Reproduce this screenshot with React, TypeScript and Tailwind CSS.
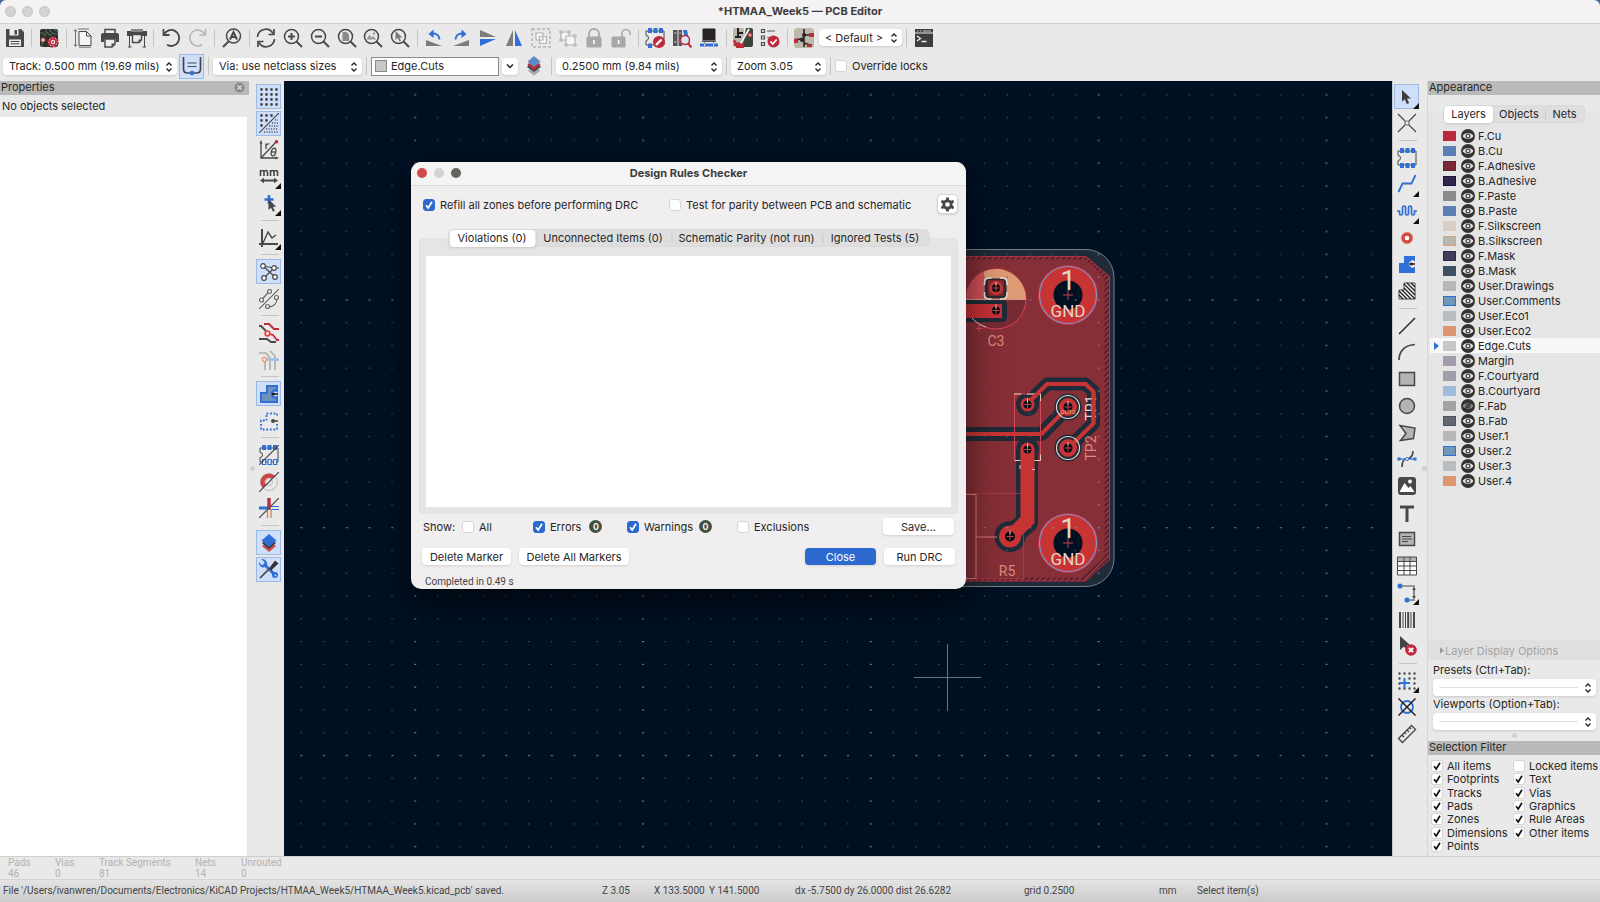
import { useState } from "react";
import type { ReactNode } from "react";
import clsx from "clsx";

const K = "#484848";
const B = "#2f6fd6";
const R = "#c0283c";
const G = "#b4b4b4";

type Tool = {
  name: string;
  icon: ReactNode;
  active?: boolean;
  more?: boolean;
};

const lens = (
  <>
    <circle cx="8.5" cy="8.5" r="7" />
    <path d="M13.5 13.5l5.5 5.5" strokeWidth="2" />
  </>
);

const footprint = (
  <path
    d="M4 3H1v4.500a2.500 2.500 0 0 1 0 5V17h18V3H4z"
    fill="none"
    stroke={K}
    strokeWidth="1"
  />
);

const topTools: (Tool | null)[] = [
  {
    name: "Save",
    icon: (
      <>
        <path d="M1 1h15l3 3v15H1z" fill={K} />
        <path d="M4.500 1h9v6.500h-9z" fill="#ececec" />
        <path d="M9.500 2h2.500v4.500H9.500z" fill={K} />
        <path d="M4 11.500h12V18H4z" fill="#ececec" />
        <path d="M5.500 13.500h9M5.500 15.800h9" stroke={K} strokeWidth="1" />
      </>
    ),
  },
  null,
  {
    name: "Board setup",
    icon: (
      <>
        <rect x="1" y="1" width="18" height="18" rx="2" fill="#2c2f2e" />
        <path
          d="M7 1v3l4 3h2M11 1v2l4 3h4M15 1l4 3M3 19v-4l3-3M1 5h3l3 3"
          fill="none"
          stroke="#55705a"
          strokeWidth="1.200"
        />
        <circle cx="4" cy="12" r="2.200" fill="#d8c8b8" stroke={R} />
        <circle
          cx="14"
          cy="14"
          r="4.600"
          fill="#e8e0e0"
          stroke={R}
          strokeWidth="2.400"
          strokeDasharray="1.900 1.710"
        />
        <circle cx="14" cy="14" r="3" fill="#e8e0e0" stroke={R} strokeWidth="1.500" />
        <circle cx="14" cy="14" r="1" fill={R} />
      </>
    ),
  },
  null,
  {
    name: "Page settings",
    icon: (
      <g fill="none" stroke="#707070" strokeWidth="1">
        <path d="M6 3.500h7.500L18 8v9.500H6z" fill="#f4f4f4" stroke={K} />
        <path d="M13.500 3.500V8H18" stroke={K} />
        <path d="M2.500 2v16M1 3.500l1.500-2 1.500 2M1 16.500l1.500 2 1.500-2M5 1h11M6 19.200h12" />
      </g>
    ),
  },
  {
    name: "Print",
    icon: (
      <>
        <path d="M5 5V1.500h10V5" fill="#ececec" stroke={K} strokeWidth="1.500" />
        <path d="M1 7a2 2 0 0 1 2-2h14a2 2 0 0 1 2 2v7h-3v-3H4v3H1z" fill={K} />
        <path d="M5 11h10v5l-3 3H5z" fill="#ececec" stroke={K} strokeWidth="1.500" />
        <path d="M15 15.500h-3.500V19z" fill={K} />
      </>
    ),
  },
  {
    name: "Plot",
    icon: (
      <>
        <path d="M0 3h20v5H0z" fill={K} />
        <path d="M4 1h12v3H4z" fill="#888" />
        <path d="M2.500 8v11M17.500 8v11M1 19h3.500M15.500 19H19" stroke={K} fill="none" />
        <path d="M5.500 6.500h9V12L12 14.500H5.500z" fill="#ececec" stroke={K} strokeWidth="1.400" />
        <path d="M14.500 11.500h-3v3z" fill={K} />
      </>
    ),
  },
  null,
  {
    name: "Undo",
    icon: (
      <g fill="none" stroke={K} strokeWidth="1.800">
        <path d="M3 6.500A8 8 0 1 1 6 16.800" />
        <path d="M2.500 1v6h6" />
      </g>
    ),
  },
  {
    name: "Redo",
    icon: (
      <g fill="none" stroke={G} strokeWidth="1.600">
        <path d="M17 6.500A8 8 0 1 0 14 16.800" />
        <path d="M17.500 1v6h-6" />
      </g>
    ),
  },
  null,
  {
    name: "Find",
    icon: (
      <>
        <g fill="none" stroke={K} strokeWidth="1.500">
          <circle cx="11.500" cy="8" r="7" />
          <path d="M6.500 13.500L1 19" strokeWidth="2" />
        </g>
        <path d="M8 11.500L11.500 4l3.500 7.500M9.500 9h4" fill="none" stroke={K} strokeWidth="2" />
      </>
    ),
  },
  null,
  {
    name: "Refresh",
    icon: (
      <g fill="none" stroke={K} strokeWidth="1.700">
        <path d="M1.500 9A8.300 8.300 0 0 1 17 5.500M18.500 11A8.300 8.300 0 0 1 3 14.500" />
        <path d="M18 1v5.500h-5.500M2 19v-5.500h5.500" />
      </g>
    ),
  },
  {
    name: "Zoom in",
    icon: (
      <g fill="none" stroke={K} strokeWidth="1.500">
        {lens}
        <path d="M8.500 5v7M5 8.500h7" strokeWidth="2" />
      </g>
    ),
  },
  {
    name: "Zoom out",
    icon: (
      <g fill="none" stroke={K} strokeWidth="1.500">
        {lens}
        <path d="M5 8.500h7" strokeWidth="2" />
      </g>
    ),
  },
  {
    name: "Zoom to page",
    icon: (
      <g fill="none" stroke={K} strokeWidth="1.500">
        {lens}
        <path d="M5.500 4h4l2.500 2.500V13H5.500z" fill="#8a8a8a" stroke="none" />
      </g>
    ),
  },
  {
    name: "Zoom to objects",
    icon: (
      <g fill="none" stroke={K} strokeWidth="1.500">
        {lens}
        <path d="M3.500 11.500l3-5 2 3 1.500-1.500 3.500 3.500z" fill="#9a9a9a" stroke="none" />
        <circle cx="11" cy="5.500" r="1.200" fill="#9a9a9a" stroke="none" />
      </g>
    ),
  },
  {
    name: "Zoom to selection",
    icon: (
      <g fill="none" stroke={K} strokeWidth="1.500">
        {lens}
        <path d="M5.500 3v9l2.200-2 1.800 3.500 1.500-.800-1.600-3.200h3z" fill="#7a7a7a" stroke="none" />
      </g>
    ),
  },
  null,
  {
    name: "Rotate counterclockwise",
    icon: (
      <>
        <path d="M2 12v6h16z" fill="#7c7c7c" />
        <path d="M6.500 6C11 4.500 15 6.500 15.500 11.500" fill="none" stroke={B} strokeWidth="1.800" />
        <path d="M9.500 1.500L4.500 6l5 4z" fill={B} />
      </>
    ),
  },
  {
    name: "Rotate clockwise",
    icon: (
      <>
        <path d="M18 12v6H2z" fill="#7c7c7c" />
        <path d="M13.500 6C9 4.500 5 6.500 4.500 11.500" fill="none" stroke={B} strokeWidth="1.800" />
        <path d="M10.500 1.500l5 4.500-5 4z" fill={B} />
      </>
    ),
  },
  {
    name: "Flip vertically",
    icon: (
      <>
        <path d="M2 2v7h16z" fill="#7c7c7c" />
        <path d="M2 18v-7h16z" fill={B} />
      </>
    ),
  },
  {
    name: "Flip horizontally",
    icon: (
      <>
        <path d="M9 2v16H2z" fill="#7c7c7c" />
        <path d="M11 2v16h7z" fill={B} />
      </>
    ),
  },
  {
    name: "Group",
    icon: (
      <g stroke={G} strokeWidth="1.200" fill="#f6f6f6">
        <path d="M1 1h18v18H1z" fill="none" strokeDasharray="3 2" strokeWidth="1.500" />
        <path d="M5 5h7v7H5zM8.500 8.500h7v7h-7z" />
      </g>
    ),
  },
  {
    name: "Ungroup",
    icon: (
      <g stroke={G} strokeWidth="1.200" fill="#f6f6f6">
        <path d="M3 4h8v8H3z" />
        <path d="M8 8h9v9H8z" />
        <path d="M2 3h2v2H2zM10 3h2v2h-2zM2 11h2v2H2zM7 16h2v2H7zM16 16h2v2h-2zM16 7h2v2h-2z" />
      </g>
    ),
  },
  {
    name: "Lock",
    icon: (
      <>
        <path d="M5 9V6a5 5 0 0 1 10 0v3" fill="none" stroke="#aaa" strokeWidth="1.800" />
        <rect x="2.500" y="8.500" width="15" height="11" rx="1.500" fill="#a8a8a8" />
        <path d="M9.200 12h1.600v4H9.200z" fill="#fff" />
      </>
    ),
  },
  {
    name: "Unlock",
    icon: (
      <>
        <path d="M11 9V5.500a4 4 0 0 1 8 0V7" fill="none" stroke="#aaa" strokeWidth="1.600" />
        <rect x="0.500" y="8.500" width="14" height="11" rx="1.500" fill="#a8a8a8" />
        <path d="M6.800 12h1.600v4H6.800z" fill="#fff" />
      </>
    ),
  },
  null,
  {
    name: "Footprint editor",
    icon: (
      <>
        {footprint}
        <path d="M3 0h4v5H3zM8.500 0h4v5h-4zM14 0h4v5h-4zM3 15.500h4V20H3z" fill={B} />
        <circle cx="14" cy="14" r="6" fill={R} />
        <path d="M11 17l5.500-5.500" stroke="#fff" strokeWidth="2.400" />
      </>
    ),
  },
  {
    name: "Footprint libraries",
    icon: (
      <>
        <path d="M1 2h4.500v16H1zM6.500 2H10v16H6.500z" fill="#555" />
        <path d="M2 5h2.500M2 14h2.500M7.500 5H9M7.500 14H9" stroke="#ccc" />
        <path d="M11 2h4l3 14h-4z" fill={B} />
        <circle cx="13" cy="12" r="4.500" fill="#dce6f2" stroke={R} strokeWidth="1.500" />
        <path d="M16 15.500l3.500 4" stroke={R} strokeWidth="2" />
      </>
    ),
  },
  {
    name: "3D viewer",
    icon: (
      <>
        <rect x="3.500" y="0.500" width="13" height="12" rx="1" fill="#282325" />
        <path d="M3 12.500h14v1.500H3z" fill="#555" />
        <path d="M5.500 14v5M14.500 14v5" stroke="#888" />
        <path d="M1 15.500h18v3H1z" fill={B} />
        <path d="M5 15.500h1v3H5zM14 15.500h1v3h-1z" fill="#dde" />
      </>
    ),
  },
  null,
  {
    name: "Update PCB from schematic",
    icon: (
      <>
        <rect x="0" y="0" width="11" height="19" rx="2" fill="#bdb8a8" />
        <path d="M13 0h5a2 2 0 0 1 2 2v15a2 2 0 0 1-2 2h-9z" fill="#3b453a" />
        <path d="M5 0v8M5 5h5M2 9h6" stroke="#222" strokeWidth="2" />
        <path d="M16 1L8 15" stroke="#eee" strokeWidth="2" />
        <circle cx="17" cy="7" r="2" fill="#e8a090" stroke={R} />
        <path d="M1 16c3 2 6 2 9 0v3H3M1 12l2 4 4-1" fill="none" stroke={R} strokeWidth="2.200" />
      </>
    ),
  },
  {
    name: "Run design rules checker",
    icon: (
      <>
        <path
          d="M1.500 1.500h3v3h-3zM1.500 8h3v3h-3zM1.500 14.500h3v3h-3z"
          fill="none"
          stroke={K}
          strokeWidth="1.200"
        />
        <path d="M7 3h8M7 9.500h3" stroke="#888" strokeWidth="1.300" />
        <circle cx="13.500" cy="13.500" r="6" fill={R} />
        <path d="M10.500 13.500l2.200 2.500 4-4.500" fill="none" stroke="#fff" strokeWidth="1.800" />
      </>
    ),
  },
  null,
  {
    name: "Open in schematic editor",
    icon: (
      <>
        <rect x="0" y="0" width="20" height="20" rx="3" fill="#bdb9ab" />
        <path
          d="M10 1v18M10 7h5M0 13l9-3M10 15l6 2"
          fill="none"
          stroke="#2a2426"
          strokeWidth="1.600"
        />
        <path d="M15 5h5v4h-5zM0 11l4-1v5H0zM13 16h5v3h-5z" fill={R} />
        <circle cx="10" cy="7" r="2" fill="#2a2426" />
        <circle cx="8" cy="12" r="2" fill="#2a2426" />
      </>
    ),
  },
];

const leftTools: (Tool | null)[] = [
  {
    name: "Show grid",
    active: true,
    icon: (
      <path
        d="M2.500 2.500h0M7.500 2.500h0M12.500 2.500h0M17.500 2.500h0M2.500 7.500h0M7.500 7.500h0M12.500 7.500h0M17.500 7.500h0M2.500 12.500h0M7.500 12.500h0M12.500 12.500h0M17.500 12.500h0M2.500 17.500h0M7.500 17.500h0M12.500 17.500h0M17.500 17.500h0"
        stroke={K}
        strokeWidth="2.800"
        strokeLinecap="round"
      />
    ),
  },
  {
    name: "Grid overrides",
    active: true,
    icon: (
      <>
        <path
          d="M2.500 2.500h0M7.500 2.500h0M12.500 2.500h0M2.500 7.500h0M7.500 7.500h0M2.500 12.500h0"
          stroke={K}
          strokeWidth="2.800"
          strokeLinecap="round"
        />
        <path
          d="M16 7h3M13 10h6M10 13h9M7 16h12M5 19h14"
          stroke="#556"
          strokeWidth="1.300"
          strokeDasharray="1.200 1.300"
        />
        <path d="M0 20L20 0" stroke={K} strokeWidth="1.200" />
      </>
    ),
  },
  {
    name: "Polar coordinates",
    icon: (
      <>
        <g fill="none" stroke={K} strokeWidth="1.300">
          <path d="M2 2v16h16" />
          <path d="M2 18L17 2" />
          <path d="M7 9V3.500M7 5.500c.800-1.500 2-2 3.500-1.500" />
          <ellipse cx="14.500" cy="12" rx="2.200" ry="4" transform="rotate(15 14.500 12)" />
          <path d="M12.500 12h4" />
        </g>
        <path d="M2 0L.5 3.500h3zM20 18l-3.500-1.500v3z" fill={K} />
        <circle cx="17.500" cy="1.800" r="1.800" fill={R} />
      </>
    ),
  },
  {
    name: "Units",
    more: true,
    icon: (
      <>
        <g fill="none" stroke={K} strokeWidth="1.600">
          <path d="M1.500 9V3M1.500 5c1-2 3.500-2 3.500 0v4M5 5c1-2 3.500-2 3.500 0v4M11.500 9V3M11.500 5c1-2 3.500-2 3.500 0v4M15 5c1-2 3.500-2 3.500 0v4" />
          <path d="M4 13.500h12" strokeWidth="2" />
        </g>
        <path d="M1 13.500l4-2.800v5.600zM19 13.500l-4-2.800v5.600z" fill={K} />
      </>
    ),
  },
  {
    name: "Crosshair cursor",
    more: true,
    icon: (
      <>
        <path d="M10 2v9M5.500 6.500h9" stroke={B} strokeWidth="2.600" />
        <path d="M9.500 6v11l2.500-2.300 2 4 1.800-.900-2-4h3.400z" fill={K} />
      </>
    ),
  },
  null,
  {
    name: "Lines angle mode",
    more: true,
    icon: (
      <g fill="none" stroke={K}>
        <path d="M3 1v18M0 16h19" strokeWidth="2" />
        <path d="M4 15L9 4l4 6 4-3" strokeWidth="1.400" />
      </g>
    ),
  },
  null,
  {
    name: "Show ratsnest",
    active: true,
    icon: (
      <g fill="#fff" stroke={K} strokeWidth="1.200">
        <path d="M4 4l11 2M15 6h5M4 4l12 11M5 16l10-10" fill="none" />
        <circle cx="4" cy="4" r="2.300" />
        <circle cx="15" cy="6" r="2.300" />
        <circle cx="16" cy="15" r="2.300" />
        <circle cx="5" cy="16" r="2.300" />
      </g>
    ),
  },
  {
    name: "Curved ratsnest",
    icon: (
      <g fill="#f4f4f4" stroke="#666" strokeWidth="1.200">
        <path d="M2.500 11l8-9M9 18c6 0 9-4 9-9M0 20L20 0" fill="none" />
        <circle cx="2.500" cy="11" r="2" />
        <circle cx="10.500" cy="2.500" r="2" />
        <circle cx="8.500" cy="17.500" r="2" />
        <circle cx="17.500" cy="8.500" r="2" />
      </g>
    ),
  },
  null,
  {
    name: "Net highlighting",
    icon: (
      <g fill="none" strokeWidth="1.800">
        <path d="M0 3h2l5 5M0 16h8l4 3h5" stroke={K} />
        <path d="M5 1h5l5 5h5M9 10.500l5 1.500 4 5h2" stroke={R} />
        <circle cx="8.500" cy="10.500" r="2.300" fill="#fff" stroke="#e0483c" />
      </g>
    ),
  },
  {
    name: "Net contrast",
    icon: (
      <g fill="none" stroke="#b0b0ac" strokeWidth="1.700">
        <path d="M0 3h7l4 5v12M11 1l5 5v14M6 11v9" />
        <path d="M8 9.500h12" stroke="#9cc0e8" strokeWidth="2.600" />
        <circle cx="5.500" cy="9.500" r="2" fill="#fff" stroke="#e09a7c" strokeWidth="1.400" />
      </g>
    ),
  },
  null,
  {
    name: "Filled zones",
    active: true,
    icon: (
      <>
        <path
          d="M8 2h10v5a3.500 3.500 0 1 0 0 6v5H2V9h6z"
          fill="#6f92bd"
          stroke={B}
          strokeWidth="2"
        />
        <path d="M13 10h6" stroke="#222" strokeWidth="1.600" />
        <circle cx="14.500" cy="10" r="1.600" fill="#222" />
      </>
    ),
  },
  {
    name: "Zone outlines",
    icon: (
      <>
        <path
          d="M7.500 2.500h10.500v4M18 13v5.500H2v-9h5.500v-7"
          fill="none"
          stroke={B}
          strokeWidth="1.800"
          strokeDasharray="1.800 1.800"
        />
        <path d="M13 10h6" stroke={K} strokeWidth="1.600" />
        <circle cx="14" cy="10" r="2" fill={K} />
      </>
    ),
  },
  null,
  {
    name: "Sketch pads",
    icon: (
      <>
        {footprint}
        <path d="M3 0h4v5H3zM8.500 0h4v5h-4zM14 0h4v5h-4z" fill={B} />
        <path
          d="M3.500 14.500h3.200v5H3.500zM9 14.500h3.200v5H9zM14.500 14.500h3.200v5h-3.200z"
          fill="#eee"
          stroke={B}
          strokeWidth="1.200"
        />
        <path d="M0 20L20 0" stroke={K} strokeWidth="1.200" />
      </>
    ),
  },
  {
    name: "Sketch vias",
    icon: (
      <g fill="none">
        <circle cx="10" cy="10" r="8.500" stroke="#bbb" />
        <circle cx="10" cy="10" r="3.500" stroke="#bbb" />
        <path d="M5.500 14.500A6.300 6.300 0 0 1 14.500 5.500" stroke="#cf4444" strokeWidth="4.500" />
        <path d="M0 20L20 0" stroke={K} strokeWidth="1.200" />
      </g>
    ),
  },
  {
    name: "Sketch tracks",
    icon: (
      <>
        <path d="M0 10h10" stroke={B} strokeWidth="3" />
        <path d="M10 0v11" stroke={R} strokeWidth="3.400" />
        <path d="M10 8.500h10M10 11.500h10" stroke={B} strokeWidth="1" />
        <path d="M8.500 11v9M12 11v9" stroke="#e07848" strokeWidth="1.200" />
        <path d="M0 20L20 0" stroke={K} strokeWidth="1.200" />
      </>
    ),
  },
  null,
  {
    name: "Appearance manager",
    active: true,
    icon: (
      <>
        <path d="M10 19l-7-6 3-2.500h8l3 2.500z" fill="#d04a48" />
        <path d="M10 16L3 10l2-1.500h10l2 1.500z" fill="#3c3c3c" />
        <path d="M10 1l7.500 6.500L10 14 2.500 7.500z" fill={B} />
      </>
    ),
  },
  {
    name: "Properties manager",
    active: true,
    icon: (
      <>
        <path d="M5 5l11 11" stroke={B} strokeWidth="3" />
        <path d="M2 0l3.500 3L5 5.500 2.500 6 0 3C-.5 7 3 9.500 6 8l2-2C9 3 6-.5 2 0z" fill={B} />
        <circle cx="16" cy="16" r="3" fill={B} />
        <circle cx="16.500" cy="16.500" r="1" fill="#cfe0fb" />
        <path d="M1 19l9-9" stroke={K} strokeWidth="1.700" />
        <path d="M10 9.500l6-8 3.500 3-7.500 7z" fill="#333" />
      </>
    ),
  },
];

const rightTools: (Tool | null)[] = [
  {
    name: "Select items",
    active: true,
    more: true,
    icon: <path d="M5 3v11.500l2.700-2.300 2.200 4.800 2.200-1-2.200-4.600h4z" fill="#3c3c3c" />,
  },
  {
    name: "Local ratsnest",
    icon: (
      <g fill="none" stroke={K} strokeWidth="1.200">
        <path d="M1 1l7.500 7.500M19 1l-7.500 7.500M1 19l7.500-7.500M19 19l-7.500-7.500" />
        <circle cx="10" cy="10" r="2" fill="#eee" stroke="#777" />
      </g>
    ),
  },
  null,
  {
    name: "Place footprints",
    icon: (
      <>
        {footprint}
        <path
          d="M3 0h4v5H3zM8.500 0h4v5h-4zM14 0h4v5h-4zM3 15h4v5H3zM8.500 15h4v5h-4zM14 15h4v5h-4z"
          fill={B}
        />
      </>
    ),
  },
  {
    name: "Route tracks",
    more: true,
    icon: <path d="M1.500 18L5.500 9.500h9L18.500 1" fill="none" stroke={B} strokeWidth="1.800" />,
  },
  {
    name: "Tune length",
    more: true,
    icon: (
      <path
        d="M0 10h2.500v2.500a1.500 1.500 0 0 0 3 0v-6a1.500 1.500 0 0 1 3 0v6a1.500 1.500 0 0 0 3 0v-6a1.500 1.500 0 0 1 3 0v6a1.500 1.500 0 0 0 3 0V10H20"
        fill="none"
        stroke={B}
        strokeWidth="1.700"
      />
    ),
  },
  {
    name: "Place vias",
    icon: (
      <>
        <circle cx="10" cy="10" r="4" fill="#fff" stroke="#d04a48" strokeWidth="3.400" />
        <circle cx="10" cy="10" r="5.800" fill="none" stroke="#e8906c" strokeWidth="0.800" />
      </>
    ),
  },
  {
    name: "Draw zones",
    icon: (
      <>
        <path d="M7 1h11v5.500a3.500 3.500 0 1 0 0 5V18H2V8h5z" fill={B} />
        <path d="M13 9h5" stroke="#222" strokeWidth="1.600" />
        <circle cx="14" cy="9" r="1.600" fill="#222" />
      </>
    ),
  },
  {
    name: "Draw rule areas",
    icon: (
      <>
        <path d="M7 2h11v16H2V9h5z" fill="#f8f8f8" stroke={K} />
        <path
          d="M2 14l4 4M2 10l8 8M5 9l9 9M7 7l11 11M7 3l11 11M10 2l8 8M14 2l4 4"
          stroke="#222"
          strokeWidth="1.400"
        />
      </>
    ),
  },
  null,
  { name: "Draw lines", icon: <path d="M2 18L18 2" stroke="#383838" strokeWidth="1.700" /> },
  {
    name: "Draw arcs",
    icon: <path d="M2 18C2 9 8 3 18 2.500" fill="none" stroke={K} strokeWidth="1.700" />,
  },
  {
    name: "Draw rectangles",
    icon: <path d="M2.500 3.500h15v13h-15z" fill={G} stroke={K} strokeWidth="1.500" />,
  },
  {
    name: "Draw circles",
    icon: <circle cx="10" cy="10" r="7.500" fill={G} stroke={K} strokeWidth="1.500" />,
  },
  {
    name: "Draw polygons",
    icon: <path d="M3 2.500L18 5l-1.500 10.500-13 2L9 10.500z" fill={G} stroke={K} strokeWidth="1.500" />,
  },
  {
    name: "Draw bezier curves",
    icon: (
      <>
        <path d="M5 18c0-7 2-8 5-8s6-3 6-8" fill="none" stroke={K} strokeWidth="1.700" />
        <path d="M2 10h16" stroke={B} strokeWidth="1.200" />
        <path d="M.5 8.500h3v3h-3zM16.500 8.500h3v3h-3z" fill={B} />
        <circle cx="10" cy="10" r="1.500" fill="#fff" stroke={B} />
      </>
    ),
  },
  {
    name: "Place images",
    icon: (
      <>
        <rect x="1" y="1" width="18" height="18" rx="3" fill={K} />
        <path d="M2.500 16l5-9 4 5 2-2 4 6z" fill="#fff" />
        <circle cx="13" cy="5.500" r="2" fill="#fff" />
      </>
    ),
  },
  { name: "Place text", icon: <path d="M3 2.500h14v3h-5.500V19h-3V5.500H3z" fill={K} /> },
  {
    name: "Draw text boxes",
    icon: (
      <>
        <path d="M2.500 3.500h15v13h-15z" fill={G} stroke={K} strokeWidth="1.500" />
        <path d="M5 7.500h9M5 10h10M5 12.500h6" stroke={K} />
      </>
    ),
  },
  {
    name: "Draw tables",
    icon: (
      <>
        <path d="M.5 1h19v18H.5z" fill="#fafafa" />
        <path d="M.5 1h19v5H.5z" fill={G} />
        <path
          d="M.5 1h19v18H.5zM.5 5.500h19M.5 10h19M.5 14.500h19M7 1v18M13 1v18"
          fill="none"
          stroke={K}
        />
      </>
    ),
  },
  {
    name: "Dimensions",
    more: true,
    icon: (
      <>
        <path d="M3 3h15M10 17h8" stroke={K} strokeWidth="1.200" />
        <path d="M17 5v10" stroke={K} strokeWidth="1.200" />
        <path d="M17 3.500l-1.800 3.500h3.600zM17 16.500L15.200 13h3.600z" fill={K} />
        <circle cx="3" cy="3" r="2.500" fill={B} />
        <circle cx="10" cy="17" r="2.500" fill={B} />
      </>
    ),
  },
  {
    name: "Barcode",
    icon: (
      <>
        <path d="M3 2v16" stroke={K} strokeWidth="2" />
        <path d="M6 2v16M8.500 2v16M14 2v16" stroke={K} strokeWidth="1" />
        <path d="M11.200 2v16M17 2v16" stroke={K} strokeWidth="2" />
      </>
    ),
  },
  {
    name: "Interactive delete",
    icon: (
      <>
        <path d="M3 0v14l4-3.500 4 6 2-2-3-5.500h3z" fill="#444" />
        <circle cx="14" cy="14" r="5.800" fill={R} />
        <path d="M11.800 11.800l4.400 4.400M16.200 11.800l-4.400 4.400" stroke="#fff" strokeWidth="1.900" />
      </>
    ),
  },
  null,
  {
    name: "Grid origin",
    more: true,
    icon: (
      <>
        <path
          d="M2.500 2.500h0M7.500 2.500h0M12.500 2.500h0M17.500 2.500h0M2.500 7.500h0M12.500 7.500h0M17.500 7.500h0M2.500 12.500h0M17.500 12.500h0M2.500 17.500h0M7.500 17.500h0M12.500 17.500h0M17.500 17.500h0"
          stroke={K}
          strokeWidth="2.400"
          strokeLinecap="round"
        />
        <path d="M7.500 7v10M3 12h10" stroke={B} strokeWidth="2" />
      </>
    ),
  },
  {
    name: "Drill origin",
    icon: (
      <>
        <circle cx="10" cy="10" r="6" fill="none" stroke={B} strokeWidth="1.800" />
        <path d="M1.500 1.500l17 17M18.500 1.500l-17 17" stroke="#222" strokeWidth="1.500" />
      </>
    ),
  },
  {
    name: "Measure",
    icon: (
      <g fill="none" stroke={K} strokeWidth="1.400">
        <path d="M1.500 14.500l13-13 4 4-13 13z" />
        <path d="M5 11l2 2M7.500 8.500l1.500 1.500M10 6l2 2M12.500 3.500L14 5" />
      </g>
    ),
  },
];

const layers = [
  { name: "F.Cu", color: "bg-[#b92b3c]" },
  { name: "B.Cu", color: "bg-[#5b7fb4]" },
  { name: "F.Adhesive", color: "bg-[#7b2a36] border border-[#5c2338]" },
  { name: "B.Adhesive", color: "bg-[#33264b] border border-[#1b1440]" },
  { name: "F.Paste", color: "bg-[#8a8a8a]" },
  { name: "B.Paste", color: "bg-[#5b7fb4]" },
  { name: "F.Silkscreen", color: "bg-[#d8cfc2]" },
  { name: "B.Silkscreen", color: "bg-[#b9b7b2] border border-[#dba07c]" },
  { name: "F.Mask", color: "bg-[#443b58] border border-[#33264b]" },
  { name: "B.Mask", color: "bg-[#3f5061]" },
  { name: "User.Drawings", color: "bg-[#b7b7b7]" },
  { name: "User.Comments", color: "bg-[#7096b8] border border-[#2f6fd6]" },
  { name: "User.Eco1", color: "bg-[#b9bdc1]" },
  { name: "User.Eco2", color: "bg-[#dd9770]" },
  { name: "Edge.Cuts", color: "bg-[#c7c7c5]" },
  { name: "Margin", color: "bg-[#a39cab]" },
  { name: "F.Courtyard", color: "bg-[#a39cab]" },
  { name: "B.Courtyard", color: "bg-[#a0bbdc]" },
  { name: "F.Fab", color: "bg-[#a3a3a3]", hidden: true },
  { name: "B.Fab", color: "bg-[#626770] border border-[#46536a]" },
  { name: "User.1", color: "bg-[#b7b7b7]" },
  { name: "User.2", color: "bg-[#7096b8] border border-[#2f6fd6]" },
  { name: "User.3", color: "bg-[#b9bdc1]" },
  { name: "User.4", color: "bg-[#dd9770]" },
];

const filters = [
  ["All items", "Locked items"],
  ["Footprints", "Text"],
  ["Tracks", "Vias"],
  ["Pads", "Graphics"],
  ["Zones", "Rule Areas"],
  ["Dimensions", "Other items"],
  ["Points"],
];

const counts = [
  { label: "Pads", value: "46", width: "w-[47px]" },
  { label: "Vias", value: "0", width: "w-[44px]" },
  { label: "Track Segments", value: "81", width: "w-[96px]" },
  { label: "Nets", value: "14", width: "w-[46px]" },
  { label: "Unrouted", value: "0", width: "w-[60px]" },
];

function ToolButton({ tool }: { tool: Tool }) {
  return (
    <button
      type="button"
      aria-label={tool.name}
      className={clsx(
        "relative flex size-[25px] shrink-0 items-center justify-center",
        tool.active && "bg-[#cfdffa] outline outline-1 -outline-offset-1 outline-[#9bbbe6]"
      )}
    >
      <svg viewBox="0 0 20 20" className="size-5">
        {tool.icon}
      </svg>
      {tool.more && (
        <svg viewBox="0 0 6 6" className="absolute right-0 bottom-0 size-[6px]">
          <path d="M6 0v6H0z" fill="#111" />
        </svg>
      )}
    </button>
  );
}

function Tools({ tools, vertical }: { tools: (Tool | null)[]; vertical?: boolean }) {
  return (
    <>
      {tools.map((tool, i) =>
        tool ? (
          <ToolButton key={tool.name} tool={tool} />
        ) : (
          <div
            key={i}
            className={clsx(
              "flex shrink-0 items-center justify-center",
              vertical ? "h-[6px]" : "w-[6px]"
            )}
          >
            <div className={clsx("bg-[#c4c4c4]", vertical ? "h-px w-[18px]" : "h-[18px] w-px")} />
          </div>
        )
      )}
    </>
  );
}

function Divider() {
  return <div className="h-[18px] w-px bg-[#c4c4c4]" />;
}

function Chevrons() {
  return (
    <svg
      viewBox="0 0 6 10"
      className="pointer-events-none absolute top-[4px] right-[5px] h-[10px] w-[6px]"
    >
      <path
        d="M.5 3.500L3 1l2.500 2.500M.5 6.500L3 9l2.500-2.500"
        fill="none"
        stroke="#222"
        strokeWidth="1.300"
      />
    </svg>
  );
}

function Picker({ label, value, className }: { label: string; value: string; className: string }) {
  return (
    <div className={clsx("relative h-[17px] rounded-[4px] bg-white shadow-sm", className)}>
      <select
        aria-label={label}
        className="h-full w-full appearance-none rounded-[4px] bg-transparent pr-4 pl-[6px]"
      >
        <option>{value}</option>
      </select>
      <Chevrons />
    </div>
  );
}

function Check({
  label,
  checked,
  plain,
}: {
  label: string;
  checked?: boolean;
  plain?: boolean;
}) {
  return (
    <label className={clsx("flex items-center whitespace-nowrap", plain ? "gap-1" : "gap-[5px]")}>
      <span className="relative flex size-3">
        <input
          type="checkbox"
          defaultChecked={checked}
          className={clsx(
            "peer size-3 appearance-none rounded-[3px] border border-[#d6d6d6] bg-white",
            !plain && "checked:border-[#2c6ad0] checked:bg-[#2c6ad0]"
          )}
        />
        <svg
          viewBox="0 0 12 12"
          className={clsx(
            "pointer-events-none absolute hidden size-3 peer-checked:block",
            plain ? "text-[#111]" : "text-white"
          )}
        >
          <path d="M3 6.300l2.200 2.700L9 2.800" fill="none" stroke="currentColor" strokeWidth="1.700" />
        </svg>
      </span>
      {label}
    </label>
  );
}

function Tabs({ tabs, className }: { tabs: { name: string; width: string }[]; className?: string }) {
  const [current, setCurrent] = useState(tabs[0].name);

  return (
    <div
      role="tablist"
      className={clsx(
        "flex h-[18px] items-center rounded-[5px] border border-[#dadada] bg-[#dfdedf]",
        className
      )}
    >
      {tabs.map((tab, i) => (
        <button
          key={tab.name}
          type="button"
          role="tab"
          aria-selected={tab.name === current}
          onClick={() => setCurrent(tab.name)}
          className={clsx(
            "relative h-[17px] rounded-[4px] whitespace-nowrap",
            tab.width,
            tab.name === current && "bg-white shadow-sm"
          )}
        >
          {i > 1 && <span className="absolute top-1 left-0 h-[9px] w-px bg-[#cacaca]" />}
          {tab.name}
        </button>
      ))}
    </div>
  );
}

function GroundPad({ x, y }: { x: number; y: number }) {
  return (
    <g transform={`translate(${x} ${y})`}>
      <circle r="29.500" fill="#c83434" stroke="#c8324c" />
      <circle r="28.500" fill="none" stroke="#7c93c4" strokeWidth="1.200" />
      <circle r="14.500" fill="#001023" />
      <path d="M-5 0H5M0-5V5" stroke="#c83c50" />
      <g fill="#e2d6cb" fontFamily="Roboto, sans-serif" textAnchor="middle">
        <text y="-5" fontSize="28">
          1
        </text>
        <text y="22" fontSize="17">
          GND
        </text>
      </g>
    </g>
  );
}

function Hole({ x, y, r, size }: { x: number; y: number; r: number; size: number }) {
  return (
    <g transform={`translate(${x} ${y})`}>
      <circle r={size} fill="#c83434" />
      <circle r={r} fill="#060c18" />
      <path d="M-3.500 0h7M0-3.500v7" stroke="#d84848" strokeWidth="0.900" />
      <path d="M0-6v3.500" stroke="#e2d6cb" strokeWidth="1" />
    </g>
  );
}

function Board() {
  return (
    <svg className="absolute inset-0 h-full w-full">
      <defs>
        <pattern
          id="grid"
          width="227.800"
          height="227.800"
          patternUnits="userSpaceOnUse"
          x="-97.500"
          y="-9.500"
        >
          {Array.from({ length: 100 }, (_, i) => {
            const col = i % 10;
            const row = Math.floor(i / 10);
            const major = col === 0 || row === 0;
            return (
              <rect
                key={i}
                x={col * 22.78}
                y={row * 22.78}
                width={major ? 1.8 : 1.2}
                height={1.2}
                fill={major ? "#7b848d" : "#525c67"}
              />
            );
          })}
        </pattern>
        <pattern
          id="hatch"
          width="4"
          height="4"
          patternUnits="userSpaceOnUse"
          patternTransform="rotate(45)"
        >
          <rect width="4" height="4" fill="#4a2430" />
          <rect width="1.500" height="4" fill="#b03040" />
        </pattern>
      </defs>
      <g transform="translate(-284 -81)">
        <rect x="700" y="249.500" width="414" height="337" rx="28" fill="#1f2b38" stroke="#77808a" />
        <path d="M700 256.500h386l23.500 20v283l-24 21.500H700z" fill="url(#hatch)" />
        <path d="M700 256.500h386l23.500 20v283l-24 21.500H700" fill="none" stroke="#b8303f" />
        <path d="M700 259.500h386l18.500 18.500v279l-22 20.500H700z" fill="#862f36" />

        {/* C3 */}
        <circle cx="996" cy="299" r="30" fill="#752a34" stroke="#dc4454" />
        <path d="M984 271.500a30 30 0 0 1 42 28h-42z" fill="#dd9a74" />
        <path d="M984 271.500a30 30 0 0 0-18 28h18z" fill="#cf5058" />
        <path d="M966 299.500h60" stroke="#d8908c" />
        <path d="M960 300h42q5 0 5 5v12q0 5-5 5h-42z" fill="#1f2b38" />
        <path d="M960 311h42" stroke="#c83038" strokeWidth="14" />
        <path d="M972 318a30 30 0 0 0 14 9" fill="none" stroke="#e0d0c4" />
        <rect x="984.500" y="278.500" width="22" height="20" rx="4" fill="#2a2a30" />
        <path
          d="M984.500 285v-2q0-5 5-5h2M1000 278h2q5 0 5 5v2M984.500 292v2q0 5 5 5h2M1000 299h2q5 0 5-5v-2"
          fill="none"
          stroke="#e4dccf"
          strokeWidth="1.500"
        />
        <rect x="988" y="280" width="16" height="16" fill="#7c2630" />
        <Hole x={996} y={288} r={4} size={7} />
        <Hole x={996} y={310.5} r={4} size={4} />
        <path d="M975.500 328.500h7M979 325v7" stroke="#dc4454" />

        {/* resistor and test points */}
        <g fill="none" stroke="#1f2b38" strokeLinejoin="round">
          <path d="M1027 404l20-20h38.500l8 7.500v32l-25 24.500" strokeWidth="13" />
          <path d="M900 434h141.500l26.500-27" strokeWidth="14" />
          <path d="M1027 450v72l-17 15" strokeWidth="22" />
        </g>
        <g fill="#1f2b38">
          <circle cx="1027.500" cy="404.500" r="11.500" />
          <circle cx="1027.500" cy="449.500" r="11.500" />
          <circle cx="1010" cy="536.500" r="15.500" />
          <circle cx="1068" cy="407" r="13.500" />
          <circle cx="1068" cy="448" r="13.500" />
        </g>
        <rect x="1014.500" y="394" width="26" height="66.500" fill="none" stroke="#d24a58" />
        <path
          d="M1014 394h7M1027 394h13.500v7M1015 460.500h7M1034 460.500h6.500v-6"
          fill="none"
          stroke="#e4cfb8"
        />
        <g fill="none" stroke="#c83434">
          <path d="M1027 404l20-20h38.500l8 7.500v32l-25 24.500" strokeWidth="4" />
          <path d="M900 434h141.500l26.500-27" strokeWidth="4" />
          <path d="M1027.500 450v70l-17.500 17" strokeWidth="14" />
        </g>
        <g fill="none" stroke="#e2d6cb" strokeWidth="1.200">
          <circle cx="1068" cy="407" r="11.500" />
          <circle cx="1068" cy="448" r="11.500" />
        </g>
        <Hole x={1027.5} y={404.5} r={4} size={7} />
        <Hole x={1027.5} y={449.5} r={4} size={7} />
        <Hole x={1068} y={407} r={4.5} size={9} />
        <Hole x={1068} y={448} r={4.5} size={9} />
        <Hole x={1010} y={536.5} r={5} size={11} />
        <path d="M1020 465v4M1032 469.500h3" stroke="#e4cfb8" />

        {/* R5 body */}
        <path d="M900 493.500h123.500v85H900" fill="none" stroke="#ac3c4c" strokeWidth="0.800" />
        <path d="M960 494.500h16v84h-16" fill="none" stroke="#dc7c7c" />
        <path d="M976 537h21" stroke="#dc7c7c" />

        <g fontFamily="Roboto, sans-serif" textAnchor="middle">
          <text x="996" y="346" fontSize="14" fill="#dc8a7c">
            C3
          </text>
          <text x="1007" y="576" fontSize="14" fill="#dc8a7c">
            R5
          </text>
          <text transform="translate(1096 448) rotate(-90)" fontSize="14" fill="#dc8a7c">
            TP2
          </text>
          <text transform="translate(1096 408) rotate(-90)" fontSize="14" fill="#e2d6cb">
            TP1
          </text>
          <text x="1068" y="414" fontSize="6" fill="#e4b890">
            OUT2
          </text>
        </g>
        <path d="M1093.500 392v31" stroke="#c83434" strokeWidth="4" />

        <GroundPad x={1068} y={295} />
        <GroundPad x={1068} y={543} />
        <path d="M914 677.500h67M947.500 644v67" stroke="#6f7379" />
      </g>
      <rect width="100%" height="100%" fill="url(#grid)" />
    </svg>
  );
}

function Badge() {
  return (
    <span className="flex size-[13px] items-center justify-center rounded-full bg-[#44503f] text-[9px] font-semibold text-white">
      0
    </span>
  );
}

function PushButton({ label, className }: { label: string; className: string }) {
  return (
    <button type="button" className={clsx("h-[17px] rounded-[4px] shadow-sm", className)}>
      {label}
    </button>
  );
}

function RulesChecker() {
  return (
    <section
      aria-label="Design Rules Checker"
      className="absolute top-[81px] left-[127px] flex h-[427px] w-[555px] flex-col overflow-hidden rounded-[10px] bg-[#f0eeef] shadow-[0_12px_36px_rgba(0,0,0,0.6)]"
    >
      <header className="relative flex h-6 shrink-0 items-center justify-center border-b border-[#dcdadb] bg-[#f5f4f4] pb-px">
        <div className="absolute left-[6px] flex gap-[7px]">
          <span className="size-[10px] rounded-full bg-[#d14a4c]" />
          <span className="size-[10px] rounded-full bg-[#d3d3d3]" />
          <span className="size-[10px] rounded-full bg-[#66625e]" />
        </div>
        <h2 className="font-bold text-[#3c3c3c]">Design Rules Checker</h2>
      </header>

      <div className="flex h-[38px] shrink-0 items-center pr-2 pl-3">
        <div className="w-[246px]">
          <Check label="Refill all zones before performing DRC" checked />
        </div>
        <Check label="Test for parity between PCB and schematic" />
        <button
          type="button"
          aria-label="Checker options"
          className="mb-[2px] ml-auto flex h-5 w-[21px] items-center justify-center rounded-[5px] border border-[#d4d4d4] bg-white shadow-sm"
        >
          <svg viewBox="0 0 16 16" className="size-[15px]">
            <circle cx="8" cy="8" r="4" fill="none" stroke={K} strokeWidth="3" />
            <path
              d="M8 .5v3M8 12.500v3M1.500 4.200l2.600 1.500M11.900 10.300l2.600 1.500M1.500 11.800l2.600-1.500M11.900 5.700l2.600-1.500"
              stroke={K}
              strokeWidth="3"
            />
          </svg>
        </button>
      </div>

      <div className="relative mx-2 mt-[14px] flex flex-1 flex-col rounded-[4px] border border-[#e2e0e1] bg-[#e6e4e5] px-[6px] pt-[17px] pb-[6px]">
        <Tabs
          className="absolute -top-[10px] left-1/2 w-[481px] -translate-x-1/2"
          tabs={[
            { name: "Violations (0)", width: "w-[86px]" },
            { name: "Unconnected Items (0)", width: "w-[136px]" },
            { name: "Schematic Parity (not run)", width: "w-[151px]" },
            { name: "Ignored Tests (5)", width: "w-[106px]" },
          ]}
        />
        <div className="flex-1 bg-white" />
      </div>

      <div className="mt-1 flex h-[17px] shrink-0 items-center pr-3 pl-3">
        <span className="w-[39px]">Show:</span>
        <div className="w-[71px]">
          <Check label="All" />
        </div>
        <div className="flex w-[94px] items-center gap-2">
          <Check label="Errors" checked />
          <Badge />
        </div>
        <div className="flex w-[110px] items-center gap-[6px]">
          <Check label="Warnings" checked />
          <Badge />
        </div>
        <Check label="Exclusions" />
        <PushButton label="Save..." className="ml-auto w-[71px] bg-white" />
      </div>

      <div className="mt-[13px] flex h-[17px] shrink-0 gap-2 pr-[11px] pl-[11px]">
        <PushButton label="Delete Marker" className="w-[89px] bg-white" />
        <PushButton label="Delete All Markers" className="w-[110px] bg-white" />
        <PushButton label="Close" className="ml-auto w-[71px] bg-[#2c6ad0] text-white" />
        <PushButton label="Run DRC" className="w-[71px] bg-white" />
      </div>
      <p className="mt-[9px] h-[15px] shrink-0 px-[14px] font-[Roboto,sans-serif] text-[10px] leading-[16px] text-[#444]">
        Completed in 0.49 s
      </p>
    </section>
  );
}

function LayerRow({ layer }: { layer: (typeof layers)[number] }) {
  const current = layer.name === "Edge.Cuts";

  return (
    <li className={clsx("flex h-[15px] items-center", current && "bg-[#f8f8f8]")}>
      <span className="flex w-[13px] pl-1">
        {current && (
          <svg viewBox="0 0 5 8" className="h-2 w-[5px]">
            <path d="M0 0l5 4-5 4z" fill={B} />
          </svg>
        )}
      </span>
      <span className={clsx("h-[10px] w-[13px]", layer.color)} />
      <button
        type="button"
        aria-label={`Toggle ${layer.name}`}
        className="ml-[5px] flex size-[14px] items-center justify-center rounded-full bg-[#333]"
      >
        <svg viewBox="0 0 14 14" className="size-[14px]">
          <path
            d="M1.500 7C4 3 10 3 12.500 7 10 11 4 11 1.500 7z"
            fill={layer.hidden ? "#8a8a8a" : "#e4e4e4"}
          />
          <circle cx="7" cy="7" r="1.900" fill="none" stroke="#444" strokeWidth="1.200" />
          {layer.hidden && <path d="M3 11l8-8" stroke="#333" strokeWidth="1.400" />}
        </svg>
      </button>
      <span className="ml-[3px]">{layer.name}</span>
    </li>
  );
}

function PresetPicker({ id, label }: { id: string; label: string }) {
  return (
    <div className="flex flex-col pr-1 pl-[5px]">
      <label htmlFor={id} className="leading-[17px]">
        {label}
      </label>
      <div className="relative h-[17px] rounded-[4px] bg-white shadow-sm">
        <select id={id} className="h-full w-full appearance-none rounded-[4px] bg-transparent">
          <option></option>
        </select>
        <span className="pointer-events-none absolute top-2 right-[18px] left-[6px] h-px bg-[#e2e2e2]" />
        <Chevrons />
      </div>
    </div>
  );
}

function SidePanel() {
  return (
    <aside className="flex w-[173px] shrink-0 flex-col border-l border-[#d6d6d6]">
      <h2 className="h-[14px] bg-[#b9b9b9] pl-px leading-[12px]">Appearance</h2>
      <div className="relative mt-[18px] flex flex-1 flex-col bg-[#e5e5e5] pt-[15px]">
        <Tabs
          className="absolute -top-2 left-[15px] w-[142px]"
          tabs={[
            { name: "Layers", width: "w-[49px]" },
            { name: "Objects", width: "w-[52px]" },
            { name: "Nets", width: "w-[39px]" },
          ]}
        />
        <ul className="pl-[2px]">
          {layers.map((layer) => (
            <LayerRow key={layer.name} layer={layer} />
          ))}
        </ul>
        <button
          type="button"
          className="mt-auto flex h-5 items-center gap-px bg-[#e0e0e0] pt-px pl-3 text-[#a4a4a4]"
        >
          <svg viewBox="0 0 5 8" className="h-[7px] w-1">
            <path d="M0 0l5 4-5 4z" fill="#999" />
          </svg>
          Layer Display Options
        </button>
      </div>
      <div className="flex flex-col pt-[2px]">
        <PresetPicker id="presets" label="Presets (Ctrl+Tab):" />
        <PresetPicker id="viewports" label="Viewports (Option+Tab):" />
      </div>
      <div className="flex h-[11px] items-center justify-center">
        <span className="size-[5px] rounded-full bg-[#d0d0d0]" />
      </div>
      <h2 className="h-[14px] bg-[#b9b9b9] pl-px leading-[13px]">Selection Filter</h2>
      <div className="mt-1 mb-[3px] grid h-[94px] grid-cols-[82px_1fr] grid-rows-7 items-center pl-[3px]">
        {filters.flat().map((name) => (
          <Check key={name} label={name} plain checked={name !== "Locked items"} />
        ))}
      </div>
    </aside>
  );
}

export default function App() {
  return (
    <div className="flex min-h-screen flex-col bg-[#46659a] font-[Inter,'Liberation_Sans',sans-serif] text-[11px] leading-[14px] text-[#262626]">
      <header className="relative flex h-6 items-center justify-center rounded-t-[6px] border-b border-[#d2d0d1] bg-[#f4f2f3] pb-px">
        <div className="absolute left-[5px] flex gap-[6px]">
          <span className="size-[11px] rounded-full border border-[#c4c4c4] bg-[#d3d3d3]" />
          <span className="size-[11px] rounded-full border border-[#c4c4c4] bg-[#d3d3d3]" />
          <span className="size-[11px] rounded-full border border-[#c4c4c4] bg-[#d3d3d3]" />
        </div>
        <h1 className="font-bold text-[#3c3c3c]">*HTMAA_Week5 — PCB Editor</h1>
      </header>

      <div className="flex h-[27px] items-center bg-[#e9e9e9] pl-[2px]">
        <div className="flex w-[815px] justify-between">
          <Tools tools={topTools} />
        </div>
        <Picker label="Variant" value="< Default >" className="mr-1 ml-[2px] w-[83px]" />
        <Divider />
        <button
          type="button"
          aria-label="Scripting console"
          className="ml-1 flex size-[25px] items-center justify-center"
        >
          <svg viewBox="0 0 20 20" className="size-5">
            <path d="M1 1h18v18H1z" fill="#3e3e3e" />
            <path d="M1 5h18" stroke="#e9e9e9" />
            <path d="M3 3h1.500M6 3h1.500M9 3h8" stroke="#ccc" strokeWidth="1.200" />
            <path d="M3 8l3.500 2.500L3 13M7.500 13.500h5" fill="none" stroke="#eee" strokeWidth="1.300" />
          </svg>
        </button>
      </div>

      <div className="flex h-[30px] items-center bg-[#e9e9e9] pl-[3px]">
        <Picker label="Track width" value="Track: 0.500 mm (19.69 mils)" className="w-[174px]" />
        <button
          type="button"
          aria-label="Use existing track width"
          className="mr-1 ml-[2px] flex size-[25px] items-center justify-center bg-[#cfdffa] outline outline-1 -outline-offset-1 outline-[#9bbbe6]"
        >
          <svg viewBox="0 0 20 20" className="size-5">
            <path d="M1.500 1v12q0 4 4 4h9q4 0 4-4V1" fill="none" stroke={K} strokeWidth="1.700" />
            <path d="M5.500 7h9M5.500 10.500h9" stroke={K} strokeWidth="1.200" />
            <circle cx="10" cy="17" r="2.300" fill={B} />
          </svg>
        </button>
        <Divider />
        <Picker label="Via size" value="Via: use netclass sizes" className="mx-1 w-[149px]" />
        <Divider />
        <label className="ml-1 flex h-[19px] w-[128px] items-center gap-1 border border-[#8a8a8a] bg-white pl-[3px]">
          <span className="size-3 shrink-0 border border-[#8a8a8a] bg-[#c7c7c5]" />
          <input
            aria-label="Active layer"
            defaultValue="Edge.Cuts"
            className="w-full min-w-0 bg-transparent outline-none"
          />
        </label>
        <button
          type="button"
          aria-label="Choose layer"
          className="ml-[3px] flex h-[17px] w-4 items-center justify-center rounded-[4px] bg-white shadow-sm"
        >
          <svg viewBox="0 0 8 6" className="h-[6px] w-2">
            <path d="M1 1.500l3 3 3-3" fill="none" stroke="#222" strokeWidth="1.500" />
          </svg>
        </button>
        <button
          type="button"
          aria-label="Layer pair"
          className="mr-[5px] ml-[3px] flex size-[25px] items-center justify-center"
        >
          <svg viewBox="0 0 20 20" className="size-5">
            <path d="M10 19.500L4 15l2-3h8l2 3z" fill="#aaa" />
            <path d="M10 16l-7-5 2-2.500h10L17 11z" fill="#4a4a4a" />
            <path d="M10 14L3.500 8.500 5 7l5 3 5-3 1.500 1.500z" fill={R} />
            <path d="M10 0l6.500 5.500L10 11 3.500 5.500z" fill="#5d8cc4" />
          </svg>
        </button>
        <Divider />
        <Picker label="Grid" value="0.2500 mm (9.84 mils)" className="mx-1 w-[166px]" />
        <Divider />
        <Picker label="Zoom" value="Zoom 3.05" className="mx-1 w-[95px]" />
        <Divider />
        <div className="ml-1">
          <Check label="Override locks" />
        </div>
      </div>

      <main className="flex flex-1 bg-[#e9e9e9]">
        <aside className="flex w-[249px] shrink-0 flex-col">
          <div className="flex h-[14px] items-center justify-between bg-[#b9b9b9] pr-1 pb-[2px] pl-px">
            <h2 className="leading-[12px]">Properties</h2>
            <button type="button" aria-label="Close properties">
              <svg viewBox="0 0 12 12" className="size-[11px]">
                <circle cx="6" cy="6" r="5.500" fill="#8a8a8a" />
                <path d="M3.800 3.800l4.400 4.400M8.200 3.800L3.800 8.200" stroke="#ddd" strokeWidth="1.500" />
              </svg>
            </button>
          </div>
          <p className="h-[22px] pl-[2px] leading-[22px]">No objects selected</p>
          <div className="mr-[2px] flex-1 bg-white" />
        </aside>
        <div className="flex w-[7px] shrink-0 items-center justify-center">
          <span className="size-[5px] rounded-full bg-[#cfcfcf]" />
        </div>
        <nav aria-label="View tools" className="w-7 shrink-0 pt-[3px]">
          <div className="flex h-[498px] flex-col justify-between">
            <Tools tools={leftTools} vertical />
          </div>
        </nav>
        <div className="relative min-w-0 flex-1 overflow-hidden bg-[#001023]">
          <Board />
          <RulesChecker />
        </div>
        <nav
          aria-label="Drawing tools"
          className="w-[29px] shrink-0 border-l border-[#c8c8c8] pt-[3px] pl-px"
        >
          <div className="flex h-[663px] flex-col justify-between">
            <Tools tools={rightTools} vertical />
          </div>
        </nav>
        <div className="flex w-[6px] shrink-0 items-center justify-center">
          <span className="size-[5px] rounded-full bg-[#cfcfcf]" />
        </div>
        <SidePanel />
      </main>

      <dl className="flex h-[23px] border-t border-[#cfcfcf] bg-[#e9e9e9] pl-2 font-[Roboto,sans-serif] text-[10px] leading-[11px] text-[#b2b2b2]">
        {counts.map((item) => (
          <div key={item.label} className={item.width}>
            <dt>{item.label}</dt>
            <dd>{item.value}</dd>
          </div>
        ))}
      </dl>

      <footer className="flex h-[23px] items-center border-t border-[#d4d4d4] bg-linear-to-b from-[#e4e4e4] to-[#cbcbcb] pb-px pl-[3px] font-[Roboto,sans-serif] text-[10px] whitespace-nowrap text-[#444]">
        <span className="w-[599px]">
          File '/Users/ivanwren/Documents/Electronics/KiCAD Projects/HTMAA_Week5/HTMAA_Week5.kicad_pcb' saved.
        </span>
        <span className="w-[52px]">Z 3.05</span>
        <span className="w-[55px]">X 133.5000</span>
        <span className="w-[86px]">Y 141.5000</span>
        <span className="w-[229px]">dx -5.7500 dy 26.0000 dist 26.6282</span>
        <span className="w-[135px]">grid 0.2500</span>
        <span className="w-[38px]">mm</span>
        <span>Select item(s)</span>
      </footer>
    </div>
  );
}
